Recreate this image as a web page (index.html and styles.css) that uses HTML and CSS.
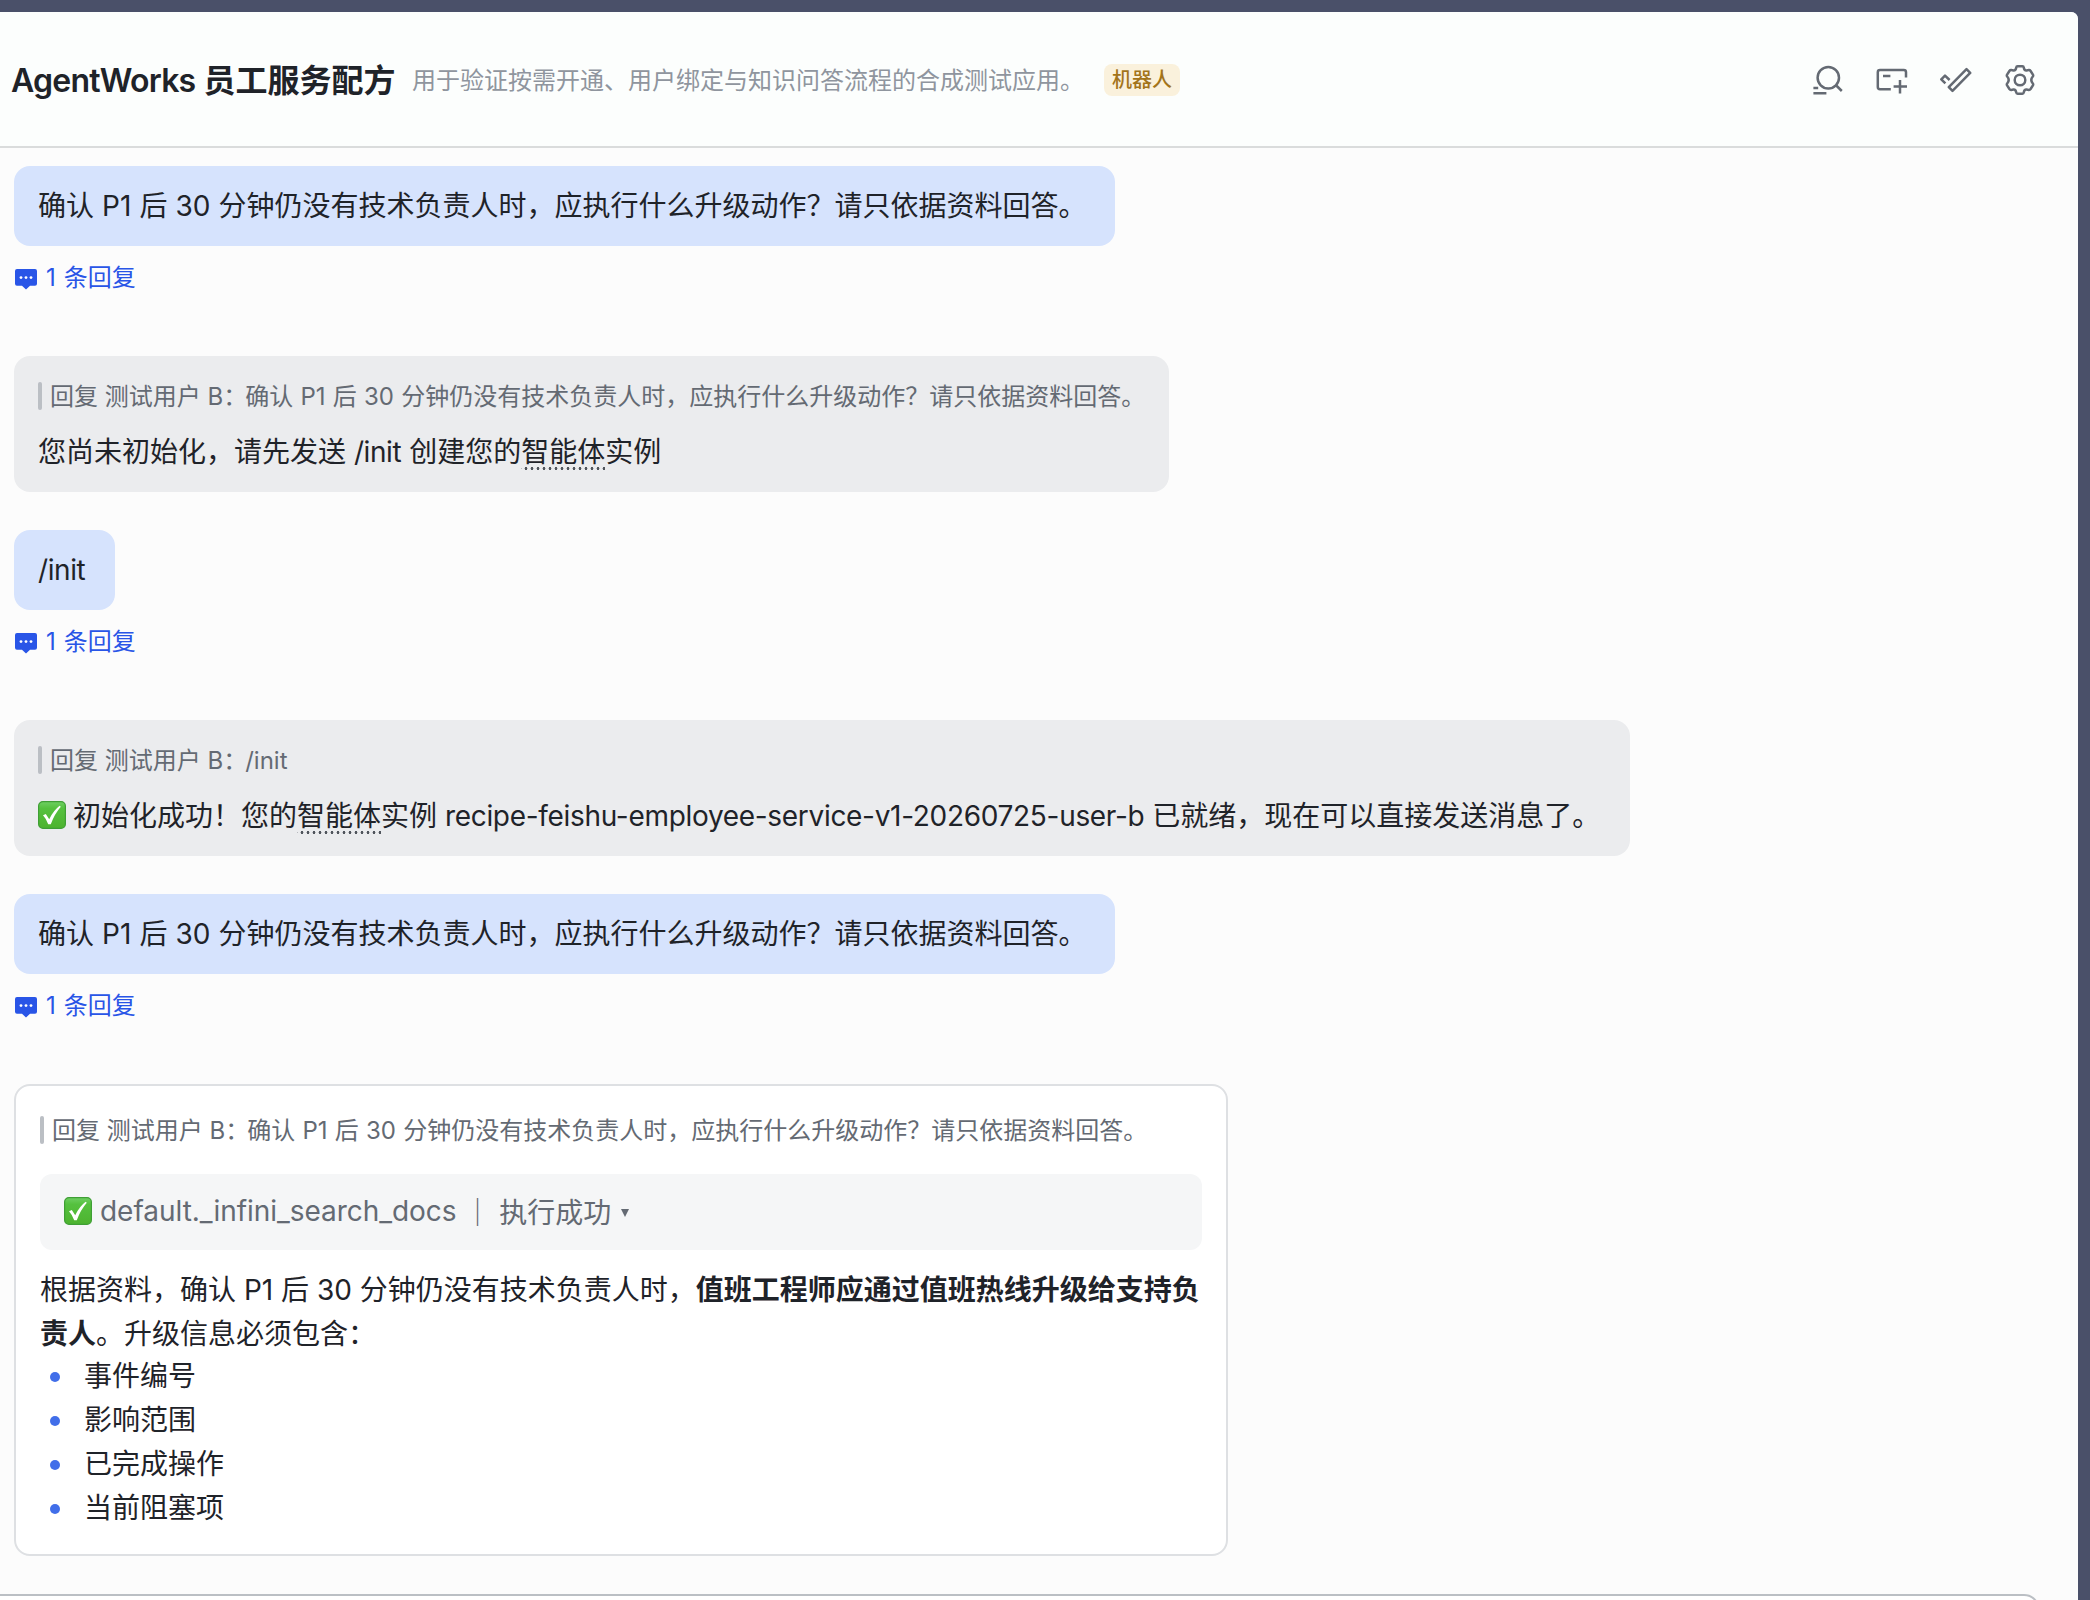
FILE: index.html
```html
<!DOCTYPE html>
<html lang="zh-CN">
<head>
<meta charset="utf-8">
<title>AgentWorks 员工服务配方</title>
<link rel="stylesheet" href="styles.css">
</head>
<body>
<svg class="defs" width="0" height="0" aria-hidden="true">
  <defs>
    <linearGradient id="green" x1="0" y1="0" x2="0" y2="1">
      <stop offset="0" stop-color="#6fcf63"/><stop offset="0.25" stop-color="#55c13f"/><stop offset="1" stop-color="#4db32f"/>
    </linearGradient>
    <symbol id="check" viewBox="0 0 28 28">
      <rect x="0.6" y="0.6" width="26.8" height="26.8" rx="4.4" fill="url(#green)" stroke="#3f9f35" stroke-width="1.2"/>
      <path d="M5 14.2 7.8 13 11.2 18.2Q15.5 9.500 21.600 4.800L22.800 5.800Q16.800 12.600 12.800 23.200H10.200Q8.200 17.600 5 14.200Z" fill="#fff"/>
    </symbol>
    <symbol id="bubble" viewBox="0 0 24 24">
      <path d="M3 2H21Q23 2 23 4V16.8Q23 18.8 21 18.8H16L12 22.6 8 18.8H3Q1 18.8 1 16.8V4Q1 2 3 2Z" fill="#2955e7"/>
      <circle cx="7" cy="10.6" r="1.4" fill="#fff"/><circle cx="12" cy="10.6" r="1.4" fill="#fff"/><circle cx="17" cy="10.6" r="1.4" fill="#fff"/>
    </symbol>
  </defs>
</svg>
<main class="window">
  <header class="header">
    <h1 class="title"><span class="title-latin">AgentWorks</span> 员工服务配方</h1>
    <p class="desc">用于验证按需开通、用户绑定与知识问答流程的合成测试应用。</p>
    <span class="badge">机器人</span>
    <nav class="actions">
      <svg viewBox="0 0 32 32"><circle cx="16.3" cy="13.7" r="10.7"/><path d="M23.8 21 29.8 27M1.4 24H6.2M1.4 29.3H14.4"/></svg>
      <svg viewBox="0 0 32 32"><path d="M14.8 25.2H4Q1.8 25.2 1.8 23V8.2Q1.8 6 4 6H27.8Q30 6 30 8.2V13.4M7 12H14.4M24 16V29.4M17.6 22.5H31"/></svg>
      <svg viewBox="0 0 32 32"><path d="M26.5 5.2 30.2 8.9 12.5 26.8 8.8 23.1ZM5.4 19.4 1.3 15.3 5 11.6 9.6 16"/></svg>
      <svg viewBox="0 0 32 32"><circle cx="16" cy="16" r="5.3"/><path d="M13.6 2.2H18.4Q19.6 2.2 19.8 3.6 20.2 6.600 22.600 6.400L24.800 6.100Q25.900 6 26.600 7L28.900 10.600Q29.500 11.600 28.800 12.500 25.800 16 28.800 19.500 29.500 20.400 28.900 21.400L26.600 25Q25.900 26 24.800 25.900L22.600 25.600Q20.200 25.400 19.800 28.400 19.600 29.800 18.400 29.800H13.600Q12.400 29.800 12.200 28.400 11.800 25.400 9.400 25.600L7.200 25.900Q6.100 26 5.400 25L3.100 21.400Q2.500 20.400 3.200 19.500 6.200 16 3.200 12.500 2.500 11.600 3.100 10.600L5.400 7Q6.100 6 7.200 6.100L9.400 6.400Q11.800 6.600 12.200 3.600 12.400 2.200 13.600 2.200Z"/></svg>
    </nav>
  </header>
  <section class="chat">
    <div class="msg mine"><p class="text">确认 P1 后 30 分钟仍没有技术负责人时，应执行什么升级动作？请只依据资料回答。</p></div>
    <a class="replies"><svg><use href="#bubble"/></svg><span>1 条回复</span></a>

    <div class="msg bot quoted-question">
      <p class="quote">回复 测试用户 B：<span class="quoted">确认 P1 后 30 分钟仍没有技术负责人时，应执行什么升级动作？请只依据资料回答。</span></p>
      <p class="text">您尚未初始化，请先发送 <span class="slash">/init</span> 创建您的<span class="term">智能体</span>实例</p>
    </div>

    <div class="msg mine command"><p class="text slash">/init</p></div>
    <a class="replies"><svg><use href="#bubble"/></svg><span>1 条回复</span></a>

    <div class="msg bot ready">
      <p class="quote">回复 测试用户 B：<span class="quoted">/init</span></p>
      <p class="text"><svg class="emoji"><use href="#check"/></svg><span class="after-emoji">初始化成功！您的<span class="term">智能体</span>实例 <span class="instance">recipe-feishu-employee-service-v1-20260725-user-b</span> 已就绪，现在可以直接发送消息了。</span></p>
    </div>

    <div class="msg mine"><p class="text">确认 P1 后 30 分钟仍没有技术负责人时，应执行什么升级动作？请只依据资料回答。</p></div>
    <a class="replies"><svg><use href="#bubble"/></svg><span>1 条回复</span></a>

    <article class="card">
      <p class="quote">回复 测试用户 B：<span class="quoted">确认 P1 后 30 分钟仍没有技术负责人时，应执行什么升级动作？请只依据资料回答。</span></p>
      <div class="tool"><svg class="emoji"><use href="#check"/></svg><span class="tool-name">default._infini_search_docs</span><span class="tool-status"> ｜ 执行成功</span><i class="caret"></i></div>
      <p class="answer">根据资料，确认 P1 后 30 分钟仍没有技术负责人时，<b>值班工程师应通过值班热线升级给支持负<br>责人</b>。升级信息必须包含：</p>
      <ul class="items">
        <li>事件编号</li><li>影响范围</li><li>已完成操作</li><li>当前阻塞项</li>
      </ul>
    </article>
    <div class="composer"></div>
  </section>
</main>
</body>
</html>
```
FILE: styles.css
```css
* { box-sizing: border-box; margin: 0; padding: 0; }
body {
  height: 1600px; overflow: hidden; padding: 12px 12px 0 0; background: #4a5069;
  font-family: Inter, "Noto Sans CJK SC", sans-serif; font-size: 28px; color: #1f2329;
}
.defs { display: block; height: 0; }
.window {
  height: 1588px; display: flex; flex-direction: column; overflow: hidden;
  background: #fcfcfc; border-top-right-radius: 7px; white-space: nowrap;
}
.header {
  flex: none; display: flex; align-items: center; height: 136px; padding: 2px 42px 0 11px;
  background: #fcfefd; border-bottom: 2px solid #dadcdc;
}
.title { padding-top: 2px; font-size: 32px; line-height: 48px; font-weight: 600; width: 384px; }
.title-latin { letter-spacing: -0.75px; }
.desc { margin-left: 17px; padding-top: 2px; width: 672px; font-size: 24px; line-height: 36px; color: #8f959e; }
.badge {
  margin-left: 20px; width: 76px; height: 32px; border-radius: 8px; background: #faf1dc;
  color: #a3741a; font-size: 20px; line-height: 32px; text-align: center; font-weight: 500;
}
.actions { margin-left: auto; display: flex; gap: 32px; }
.actions svg { display: block; width: 32px; height: 32px; fill: none; stroke: #646a73; stroke-width: 2.5; stroke-linejoin: round; }

.chat { flex: 1; display: flex; flex-direction: column; align-items: flex-start; padding: 18px 38px 0 14px; }
.msg { flex: none; border-radius: 16px; padding: 0 24px; }
.mine { width: 1101px; height: 80px; background: #d6e3fd; }
.mine .text { line-height: 80px; word-spacing: 0.2px; }
.command { width: 101px; }
.slash { letter-spacing: -0.4px; }
.replies {
  flex: none; display: flex; align-items: center; height: 32px; margin: 16px 0 62px;
  color: #2955e7; font-size: 24px; word-spacing: 1.3px;
}
.replies svg { width: 24px; height: 24px; margin: 1px 8px 0 0; }
.replies span { line-height: 36px; }
.bot { height: 136px; margin-bottom: 38px; padding-top: 22px; background: #ebecee; }
.quoted-question { width: 1155px; }
.ready { width: 1616px; }
.quote { display: flex; align-items: flex-start; height: 36px; line-height: 37px; font-size: 24px; color: #646a73; }
.quote::before { content: ""; flex: none; width: 4px; height: 28px; margin: 4px 8px 0 0; border-radius: 2px; background: #bbbfc4; }
.quoted { margin-left: -2px; word-spacing: 0.5px; }
.bot .text { margin-top: 16px; line-height: 44px; }
.term { background: radial-gradient(circle, #51565d 1.3px, transparent 1.6px) 2px bottom / 6px 3px repeat-x; padding-bottom: 1px; }
.emoji { flex: none; width: 28px; height: 28px; vertical-align: -3px; }
.after-emoji { margin-left: 7px; }
.instance { letter-spacing: -0.31px; }

.card {
  flex: none; width: 1214px; height: 472px; padding: 26px 24px 0; border: 2px solid #dee0e3;
  border-radius: 16px; background: #fff;
}
.tool {
  display: flex; align-items: center; white-space: pre; height: 76px; margin-top: 26px; padding: 0 0 3px 24px;
  border-radius: 12px; background: #f5f6f7; color: #646a73;
}
.tool-name { margin-left: 8px; letter-spacing: -0.04px; }
.tool-status { margin-left: -1px; }
.caret { margin: 5px 0 0 10px; border: 4.5px solid transparent; border-top: 8px solid #646a73; border-bottom: 0; }
.answer { margin-top: 18px; line-height: 44px; }
.items { list-style: none; }
.items li { display: flex; align-items: flex-start; height: 44px; line-height: 40px; }
.items li::before { content: ""; width: 10px; height: 10px; margin: 16px 24px 0 10px; border-radius: 50%; background: #416ee9; }
.composer {
  flex: none; align-self: stretch; height: 60px; margin: 38px 0 0 -40px; border: 2px solid #bbbfc4;
  border-radius: 16px; background: #fff;
}
```
